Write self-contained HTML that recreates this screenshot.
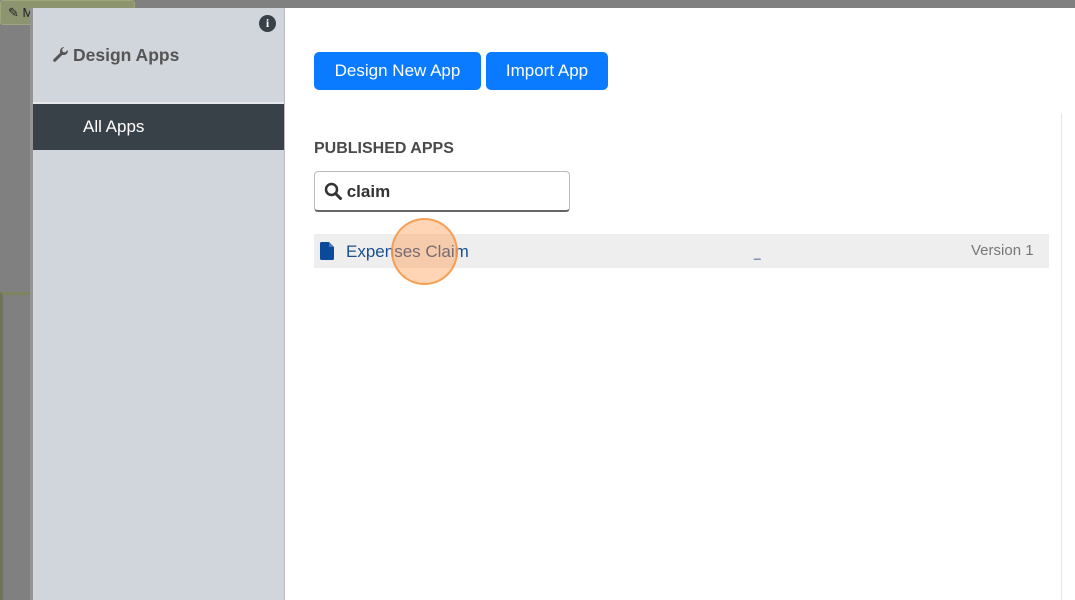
<!DOCTYPE html>
<html><head><style>
body{margin:0;width:1075px;height:600px;overflow:hidden;background:#808080;font-family:"Liberation Sans",sans-serif;position:relative}
div{position:absolute;box-sizing:border-box}
.btn{background:#0a7bff;color:#fff;border-radius:5px;font-size:17px;text-align:center;line-height:38px;top:52px;height:38px}
</style></head><body>
<div style="left:0;top:0;width:135px;height:25px;background:#8d9470;border:1px solid #a0a67a;border-radius:3px"></div>
<div style="left:8px;top:5px;font-size:13px;color:#222">✎ M</div>
<div style="left:0;top:292px;width:33px;height:308px;border-left:3px solid #6f7558;border-top:3px solid #7d8460"></div>
<div style="left:30px;top:8px;width:3px;height:592px;background:#949494"></div>
<div style="left:33px;top:8px;width:252px;height:592px;background:#d1d5dc;border-right:1px solid #bbb"></div>
<div style="left:33px;top:102px;width:251px;height:2px;background:#e6e8ec"></div>
<div style="left:33px;top:104px;width:251px;height:46px;background:#384148;color:#fff;font-size:17px;line-height:46px;padding-left:50px">All Apps</div>
<div style="left:52px;top:45px;font-size:17.5px;font-weight:bold;color:#555">
<svg width="17" height="17" viewBox="0 0 16 16" style="vertical-align:-2px;margin-right:4px"><path d="M15 4.5a4 4 0 0 1-5.3 3.8L3.5 14.5a1.4 1.4 0 0 1-2-2l6.2-6.2A4 4 0 0 1 11.5 1L9.5 3l.5 2.5 2.5.5 2-2z" fill="#555"/></svg>Design Apps</div>
<div style="left:259px;top:15px;width:17px;height:17px;border-radius:50%;background:#384148;color:#fff;font-size:12px;font-weight:bold;text-align:center;line-height:17px;font-family:'Liberation Serif',serif">i</div>
<div style="left:285px;top:8px;width:790px;height:592px;background:#fff"></div>
<div class="btn" style="left:314px;width:167px">Design New App</div>
<div class="btn" style="left:486px;width:122px">Import App</div>
<div style="left:314px;top:140px;font-size:16px;font-weight:bold;color:#4a4a4a">PUBLISHED APPS</div>
<div style="left:314px;top:171px;width:256px;height:41px;border:1px solid #bbb;border-bottom:2px solid #666;border-radius:4px;font-size:17px;font-weight:bold;color:#333;line-height:39px;padding-left:9px">
<svg width="18" height="18" viewBox="0 0 18 18" style="vertical-align:-3px"><circle cx="7.5" cy="7.5" r="5.5" stroke="#333" stroke-width="2.5" fill="none"/><path d="M11.5 11.5l5 5" stroke="#333" stroke-width="3" stroke-linecap="round"/></svg> claim</div>
<div style="left:1061px;top:113px;width:1px;height:487px;background:#e5e5e5"></div>
<div style="left:314px;top:234px;width:735px;height:34px;background:#eee"></div>
<div style="left:320px;top:242px"><svg width="14" height="18" viewBox="0 0 14 18"><path d="M0 1.5Q0 0 1.5 0H9L14 5V16.5Q14 18 12.5 18H1.5Q0 18 0 16.5Z" fill="#0b4a9a"/><path d="M9 0V5H14" fill="#4a78b8"/></svg></div>
<div style="left:346px;top:242px;font-size:17px;color:#1a4f8f">Expenses Claim</div>
<div style="left:754px;top:246px;font-size:12px;color:#1a3a7a">_</div>
<div style="left:971px;top:242px;font-size:15px;color:#777">Version 1</div>
<div style="left:391px;top:218px;width:67px;height:67px;border-radius:50%;background:rgba(255,150,70,0.4);border:2px solid rgba(245,150,70,0.85)"></div>
</body></html>
